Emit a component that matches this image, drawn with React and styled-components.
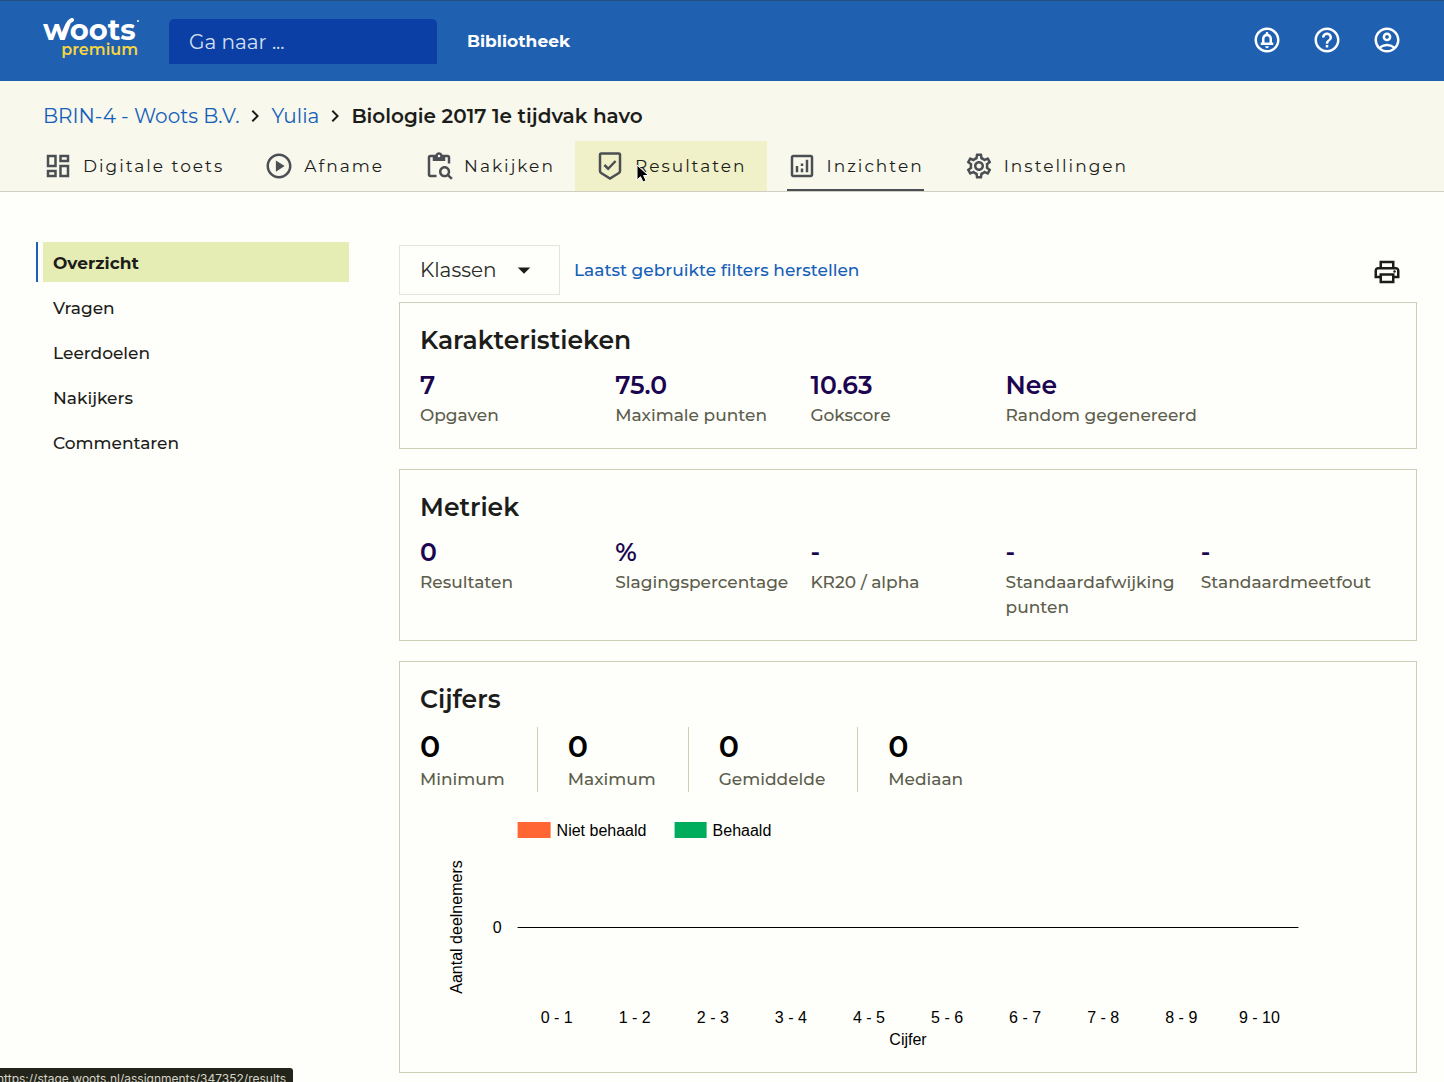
import React from 'react';
import styled, { createGlobalStyle, css } from 'styled-components';
import {
  MdArrowDropDown,
  MdChevronRight,
  MdHelpOutline,
  MdOutlineAccountCircle,
  MdOutlineAnalytics,
  MdOutlineCircleNotifications,
  MdOutlineContentPasteSearch,
  MdOutlineDashboard,
  MdOutlinePlayCircle,
  MdOutlinePrint,
  MdOutlineSettings,
} from 'react-icons/md';

const CheckShield = () => (
  <svg width="30" height="30" viewBox="0 0 24 24" fill="none" stroke="currentColor" strokeWidth="2">
    <path d="M5 2h14a1 1 0 0 1 1 1v12.9c0 .7-.3 1.300-.9 1.700L12 22l-7.100-4.400c-.6-.4-.9-1-.9-1.700V3a1 1 0 0 1 1-1z" />
    <path d="M7.500 11.200l3 3 6-6.200" />
  </svg>
);

const tabs = [
  { label: 'Digitale toets', Icon: MdOutlineDashboard },
  { label: 'Afname', Icon: MdOutlinePlayCircle },
  { label: 'Nakijken', Icon: MdOutlineContentPasteSearch },
  { label: 'Resultaten', Icon: CheckShield, hovered: true },
  { label: 'Inzichten', Icon: MdOutlineAnalytics, active: true },
  { label: 'Instellingen', Icon: MdOutlineSettings },
];

const menu = ['Overzicht', 'Vragen', 'Leerdoelen', 'Nakijkers', 'Commentaren'];

const characteristics = [
  { value: '7', label: 'Opgaven' },
  { value: '75.0', label: 'Maximale punten' },
  { value: '10.63', label: 'Gokscore' },
  { value: 'Nee', label: 'Random gegenereerd' },
];

const metrics = [
  { value: '0', label: 'Resultaten' },
  { value: '%', label: 'Slagingspercentage' },
  { value: '-', label: 'KR20 / alpha' },
  { value: '-', label: 'Standaardafwijking punten' },
  { value: '-', label: 'Standaardmeetfout' },
];

const grades = ['Minimum', 'Maximum', 'Gemiddelde', 'Mediaan'];

const ranges = ['0 - 1', '1 - 2', '2 - 3', '3 - 4', '4 - 5', '5 - 6', '6 - 7', '7 - 8', '8 - 9', '9 - 10'];

const Logo = () => (
  <LogoSvg width="96" height="46" viewBox="0 0 96 46" role="img" aria-label="Woots premium">
    <LogoText x="0" y="22">woots</LogoText>
    <path d="M19 18c4-5 4-14 10-16" fill="none" stroke="#fff" strokeWidth="4" strokeLinecap="round" />
    <circle cx="95" cy="3" r="1" fill="#fff" />
    <PremiumText x="95" y="37" textAnchor="end">premium</PremiumText>
  </LogoSvg>
);

const Stats = ({ items }) => (
  <StatGrid>
    {items.map(({ value, label }) => (
      <div key={label}>
        <Value>{value}</Value>
        <Label>{label}</Label>
      </div>
    ))}
  </StatGrid>
);

const Chart = () => (
  <ChartSvg role="img" aria-label="Aantal deelnemers per cijfer">
    <svg x="10%" overflow="visible">
      <rect x="0" y="30" width="33" height="16" fill="#ff6633" />
      <text x="39" y="44">Niet behaald</text>
      <rect x="157" y="30" width="32" height="16" fill="#00ad5c" />
      <text x="195" y="44">Behaald</text>
      <text x="-16" y="141" textAnchor="end">0</text>
      <text transform="translate(-56 135) rotate(-90)" textAnchor="middle">Aantal deelnemers</text>
    </svg>
    <rect x="10%" y="135" width="80%" height="1" />
    {ranges.map((range, i) => (
      <text key={range} x={`${14 + i * 8}%`} y="231" textAnchor="middle">{range}</text>
    ))}
    <text x="50%" y="253" textAnchor="middle">Cijfer</text>
  </ChartSvg>
);

const App = () => {
  return (
    <>
      <GlobalStyle />
      <Header>
        <LogoLink href="#"><Logo /></LogoLink>
        <Search type="text" placeholder="Ga naar ..." aria-label="Ga naar" />
        <Library href="#">Bibliotheek</Library>
        <HeaderActions>
          <IconButton aria-label="Meldingen"><MdOutlineCircleNotifications size={30} /></IconButton>
          <IconButton aria-label="Help"><MdHelpOutline size={30} /></IconButton>
          <IconButton aria-label="Account"><MdOutlineAccountCircle size={30} /></IconButton>
        </HeaderActions>
      </Header>
      <SubHeader>
        <Breadcrumbs aria-label="Kruimelpad">
          <a href="#">BRIN-4 - Woots B.V.</a>
          <MdChevronRight size={24} />
          <a href="#">Yulia</a>
          <MdChevronRight size={24} />
          <strong>Biologie 2017 1e tijdvak havo</strong>
        </Breadcrumbs>
        <Tabs>
          {tabs.map(({ label, Icon, hovered, active }) => (
            <Tab key={label} href="#" $hovered={hovered}>
              <TabInner $active={active}>
                <Icon size={30} />
                <TabLabel>
                  {label}
                  {hovered && (
                    <Pointer width="14" height="20" viewBox="0 0 14 20">
                      <path d="M1 1v15l3.500-3.300L7 18l3-1.300-2.400-5.200H12.500z" fill="#000" stroke="#fff" />
                    </Pointer>
                  )}
                </TabLabel>
              </TabInner>
            </Tab>
          ))}
        </Tabs>
      </SubHeader>
      <Page>
        <Sidebar>
          {menu.map((item, i) => (
            <MenuItem key={item} $active={i === 0}>
              <a href="#">{item}</a>
            </MenuItem>
          ))}
        </Sidebar>
        <main>
          <Filters>
            <SelectWrapper>
              <select aria-label="Klassen">
                <option>Klassen</option>
              </select>
              <MdArrowDropDown size={30} />
            </SelectWrapper>
            <a href="#">Laatst gebruikte filters herstellen</a>
            <PrintButton aria-label="Afdrukken"><MdOutlinePrint size={30} /></PrintButton>
          </Filters>
          <Card>
            <h2>Karakteristieken</h2>
            <Stats items={characteristics} />
          </Card>
          <Card>
            <h2>Metriek</h2>
            <Stats items={metrics} />
          </Card>
          <Card>
            <h2>Cijfers</h2>
            <Grades>
              {grades.map((label) => (
                <Grade key={label}>
                  <GradeValue>0</GradeValue>
                  <Label>{label}</Label>
                </Grade>
              ))}
            </Grades>
            <Chart />
          </Card>
        </main>
      </Page>
      <StatusBar>https://stage.woots.nl/assignments/347352/results</StatusBar>
    </>
  );
};

const GlobalStyle = createGlobalStyle`
  * {
    box-sizing: border-box;
  }
  body {
    margin: 0;
    background: #fefefa;
    color: #1c1d1a;
    font-family: Montserrat, Inter, sans-serif;
    font-size: 17px;
    font-weight: 500;
    line-height: 25px;
  }
  a {
    color: #1560b8;
    text-decoration: none;
  }
  svg {
    flex-shrink: 0;
  }
`;

const Header = styled.header`
  display: flex;
  align-items: center;
  height: 81px;
  padding: 0 42px 0 43px;
  background: #1f60b0;
  border-top: 1px solid #23507c;
`;

const LogoLink = styled.a`
  display: flex;
  margin-right: 30px;
`;

const LogoSvg = styled.svg`
  overflow: visible;
  font-family: Montserrat, Inter, sans-serif;
`;

const LogoText = styled.text`
  font-size: 29px;
  font-weight: 700;
  fill: #fff;
`;

const PremiumText = styled.text`
  font-size: 16px;
  font-weight: 600;
  fill: #f5d442;
`;

const Search = styled.input`
  width: 268px;
  height: 45px;
  padding: 2px 20px 0;
  border: 0;
  border-radius: 5px 5px 0 0;
  background: #0c3fa6;
  color: #fff;
  font: inherit;
  font-size: 20px;
  font-weight: 400;
  &::placeholder {
    color: #d5e0f0;
    opacity: 1;
  }
`;

const Library = styled.a`
  margin-left: 30px;
  color: #fff;
  font-weight: 700;
`;

const HeaderActions = styled.div`
  display: flex;
  gap: 30px;
  margin-left: auto;
`;

const IconButton = styled.button`
  display: flex;
  padding: 0 0 2px;
  border: 0;
  background: none;
  color: #fff;
`;

const SubHeader = styled.div`
  padding-top: 20px;
  background: #f8f8ed;
  border-bottom: 1px solid #cfcfc4;
`;

const Breadcrumbs = styled.nav`
  display: flex;
  align-items: center;
  gap: 4px;
  height: 30px;
  padding: 0 43px;
  font-size: 20px;
  font-weight: 400;
  strong {
    font-weight: 600;
  }
`;

const Tabs = styled.nav`
  display: flex;
  margin-top: 10px;
  padding: 0 23px;
`;

const Tab = styled.a`
  display: flex;
  height: 50px;
  padding: 0 20px;
  color: #1c1d1a;
  font-weight: 400;
  background: ${({ $hovered }) => ($hovered ? '#f0f1c8' : 'none')};
`;

const TabInner = styled.span`
  display: flex;
  align-items: center;
  gap: 10px;
  padding-top: 2px;
  border-bottom: 2px solid ${({ $active }) => ($active ? '#4b4f53' : 'transparent')};
  svg {
    color: #4b4f53;
  }
`;

const TabLabel = styled.span`
  position: relative;
  letter-spacing: 2px;
`;

/* mouse pointer over the hovered tab */
const Pointer = styled.svg`
  position: absolute;
  top: 10px;
  left: 1px;
`;

const Page = styled.div`
  display: grid;
  grid-template-columns: 313px minmax(0, 1fr);
  gap: 50px;
  padding: 50px 27px 9px 36px;
`;

const Sidebar = styled.nav`
  display: flex;
  flex-direction: column;
  gap: 5px;
`;

const MenuItem = styled.div`
  padding-left: 5px;
  border-left: 2px solid transparent;
  a {
    display: flex;
    align-items: center;
    height: 40px;
    padding: 2px 10px 0;
    color: #1c1d1a;
  }
  ${({ $active }) =>
    $active &&
    css`
      border-color: #1f5fb5;
      a {
        background: #e6edb4;
        font-weight: 700;
      }
    `}
`;

const Filters = styled.div`
  display: flex;
  align-items: center;
  gap: 14px;
  margin: 3px 0 7px;
`;

const SelectWrapper = styled.div`
  position: relative;
  select {
    width: 161px;
    height: 50px;
    padding: 0 20px;
    border: 1px solid #e4e4da;
    background: none;
    color: #2b2c29;
    font: inherit;
    font-size: 20px;
    font-weight: 400;
    appearance: none;
  }
  svg {
    position: absolute;
    top: 10px;
    right: 21px;
    pointer-events: none;
  }
`;

const PrintButton = styled(IconButton)`
  margin-left: auto;
  margin-right: 15px;
  padding: 3px 0 0;
  color: #1c1d1a;
`;

const Card = styled.section`
  padding: 20px;
  border: 1px solid #cdcdb8;
  & + & {
    margin-top: 20px;
  }
  h2 {
    margin: 0 0 10px;
    font-size: 25px;
    font-weight: 600;
    line-height: 35px;
  }
`;

const StatGrid = styled.div`
  display: grid;
  grid-template-columns: repeat(5, minmax(0, 1fr));
`;

const Value = styled.div`
  color: #1b0550;
  font-size: 25px;
  font-weight: 600;
  line-height: 35px;
`;

const Label = styled.div`
  color: #5c5d4c;
`;

const Grades = styled.div`
  display: flex;
`;

const Grade = styled.div`
  padding-right: 32px;
  & + & {
    padding-left: 30px;
    border-left: 1px solid #cdcdb8;
  }
`;

const GradeValue = styled.div`
  color: #000;
  font-size: 30px;
  font-weight: 600;
  line-height: 40px;
`;

const ChartSvg = styled.svg`
  display: block;
  width: 100%;
  height: 260px;
  font-family: 'Liberation Sans', Arial, sans-serif;
  font-size: 16px;
  font-weight: 400;
`;

/* link preview in the window corner */
const StatusBar = styled.div`
  position: fixed;
  bottom: 0;
  left: 0;
  height: 14px;
  padding-right: 7px;
  overflow: hidden;
  border-top-right-radius: 3px;
  background: #24251a;
  color: #d4d4c8;
  font-family: Inter, sans-serif;
  font-size: 12px;
  font-weight: 400;
  line-height: 22px;
  text-indent: -3px;
`;

export default App;
